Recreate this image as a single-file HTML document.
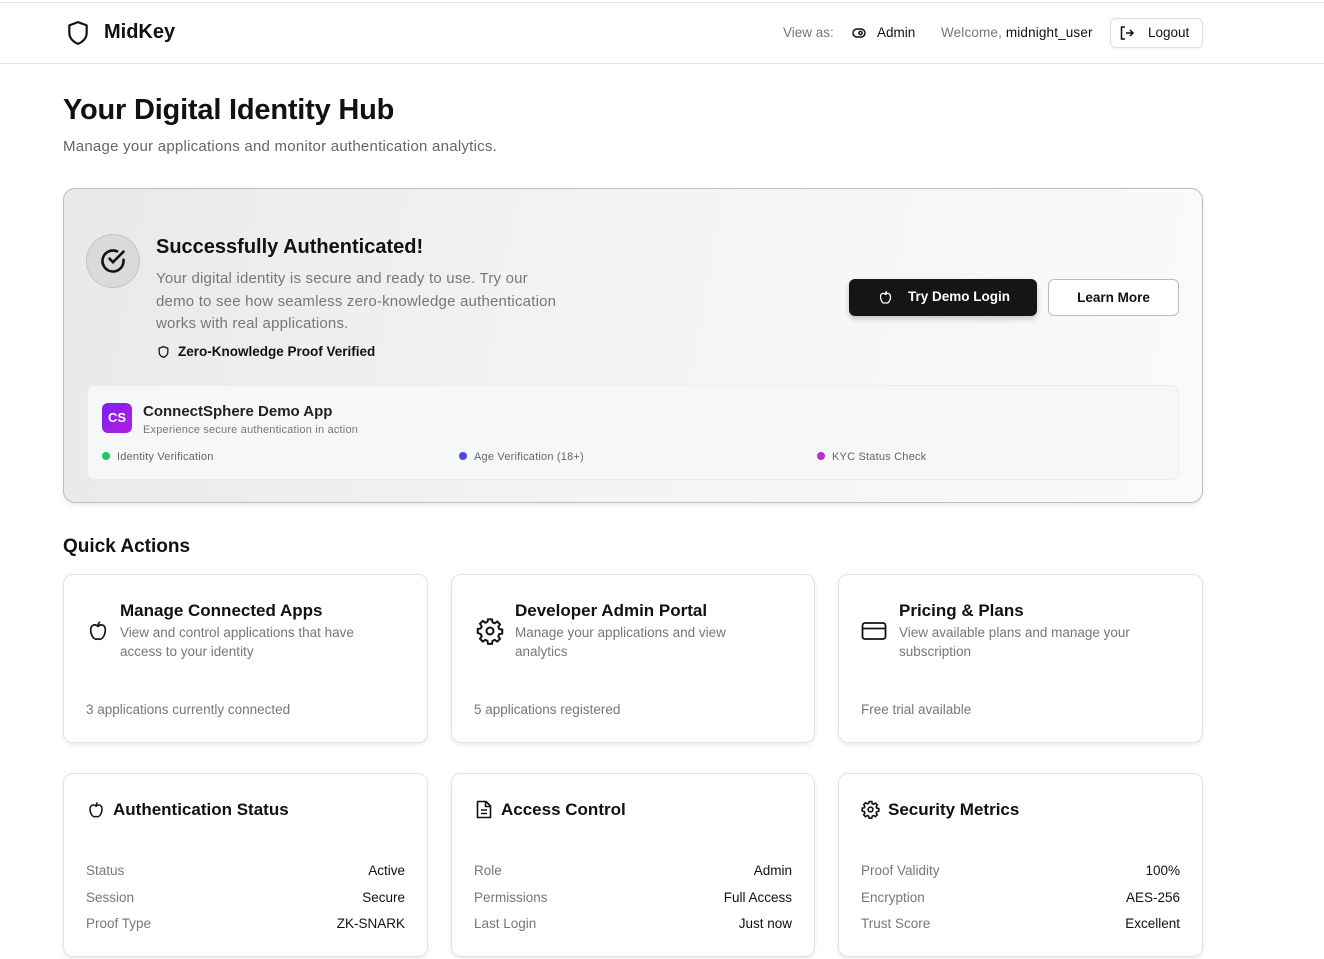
<!DOCTYPE html>
<html><head><meta charset="utf-8">
<style>
*{box-sizing:border-box;margin:0;padding:0}
body{width:1324px;height:959px;overflow:hidden;background:#fff;font-family:"Liberation Sans",sans-serif;color:#111;position:relative}
.a{position:absolute}
.hdr{position:absolute;left:0;top:2px;width:1324px;height:62px;border-top:1px solid #e3e3e3;border-bottom:1px solid #e6e6e6}
.card{position:absolute;border:1px solid #e2e2e2;border-radius:10px;box-shadow:0 2px 4px rgba(0,0,0,.08);background:#fff}
.t{font-size:17px;font-weight:bold;color:#111}
.d{font-size:13.5px;color:#777;line-height:19px}
.row{position:absolute;left:22px;right:22px;font-size:13.5px;display:flex;justify-content:space-between}
.row span:first-child{color:#777}
.row span:last-child{color:#111}
svg{display:block}
</style></head><body>
<div class="hdr"></div>
<svg class="a" style="left:65px;top:19px" width="26" height="28" viewBox="0 0 24 24" fill="none" stroke="#111" stroke-width="2" stroke-linejoin="round"><path d="M12 2 L20 5 V12 C20 17 16 20.5 12 22 C8 20.5 4 17 4 12 V5 Z"/></svg>
<div class="a" style="left:104px;top:21px;font-size:20px;font-weight:bold">MidKey</div>
<div class="a" style="left:783px;top:25px;font-size:13.5px;color:#777">View as:</div>
<svg class="a" style="left:852px;top:27px" width="14" height="12" viewBox="0 0 14 12" fill="none" stroke="#111" stroke-width="1.5"><rect x="1" y="2" width="12" height="8" rx="4"/><circle cx="8.5" cy="6" r="1.6"/></svg>
<div class="a" style="left:877px;top:25px;font-size:13.5px">Admin</div>
<div class="a" style="left:941px;top:25px;font-size:13.5px;color:#777;letter-spacing:.15px">Welcome, <span style="color:#111">midnight_user</span></div>
<div class="a" style="left:1110px;top:18px;width:93px;height:30px;border:1px solid #ddd;border-radius:6px;box-shadow:0 1px 2px rgba(0,0,0,.06)"></div>
<svg class="a" style="left:1120px;top:26px" width="15" height="14" viewBox="0 0 15 14" fill="none" stroke="#111" stroke-width="1.5"><path d="M5 1H1.5V13H5M6 7H13M10 4L13 7L10 10"/></svg>
<div class="a" style="left:1148px;top:25px;font-size:13.5px">Logout</div>

<div class="a" style="left:63px;top:94px;font-size:29px;font-weight:bold;letter-spacing:-.2px">Your Digital Identity Hub</div>
<div class="a" style="left:63px;top:138px;font-size:15px;color:#666;letter-spacing:.25px">Manage your applications and monitor authentication analytics.</div>

<div class="a" style="left:63px;top:188px;width:1140px;height:315px;border:1px solid #bdbdbd;border-radius:12px;background:linear-gradient(100deg,#e9e9e9 0%,#f4f4f4 50%,#fafafa 100%);box-shadow:0 2px 4px rgba(0,0,0,.08)"></div>
<div class="a" style="left:86px;top:234px;width:54px;height:54px;border-radius:50%;background:#dadada;border:1px solid #c4c4c4"></div>
<svg class="a" style="left:99px;top:247px" width="28" height="28" viewBox="0 0 24 24" fill="none" stroke="#111" stroke-width="2.2" stroke-linecap="round"><path d="M21 11V12A9 9 0 1 1 15.5 3.7"/><path d="M21 4L12 13L9 10"/></svg>
<div class="a" style="left:156px;top:236px;font-size:20px;font-weight:bold">Successfully Authenticated!</div>
<div class="a" style="left:156px;top:268px;white-space:nowrap;font-size:15px;line-height:22.5px;color:#777;letter-spacing:.2px">Your digital identity is secure and ready to use. Try our<br>demo to see how seamless zero-knowledge authentication<br>works with real applications.</div>
<svg class="a" style="left:157px;top:345px" width="13" height="14" viewBox="0 0 24 24" fill="none" stroke="#111" stroke-width="2.4" stroke-linejoin="round"><path d="M12 2 L20 5 V12 C20 17 16 20.5 12 22 C8 20.5 4 17 4 12 V5 Z"/></svg>
<div class="a" style="left:178px;top:344px;font-size:13.5px;font-weight:bold;color:#111">Zero-Knowledge Proof Verified</div>
<div class="a" style="left:849px;top:279px;width:188px;height:37px;background:#151515;border-radius:6px;box-shadow:0 3px 6px rgba(0,0,0,.2)"></div>
<svg class="a" style="left:878px;top:290px" width="15" height="15" viewBox="0 0 24 24" fill="none" stroke="#fff" stroke-width="2"><path d="M12 7C9 4 4 5 4 11C4 16 7 21 10 21C11 21 11.5 20.5 12 20.5C12.5 20.5 13 21 14 21C17 21 20 16 20 11C20 5 15 4 12 7ZM12 7C12 5 13 3 14 2"/></svg>
<div class="a" style="left:908px;top:289px;font-size:13.5px;font-weight:bold;color:#fff">Try Demo Login</div>
<div class="a" style="left:1048px;top:279px;width:131px;height:37px;border:1px solid #bbb;border-radius:6px;background:#fff;font-size:13.5px;font-weight:bold;text-align:center;line-height:35px">Learn More</div>

<div class="a" style="left:87px;top:385px;width:1092px;height:95px;border:1px solid #ececec;border-radius:8px;background:#f6f7f7"></div>
<div class="a" style="left:102px;top:403px;width:30px;height:30px;border-radius:6px;background:linear-gradient(135deg,#7b1ff2,#b21fe0);color:#fff;font-size:13px;font-weight:bold;text-align:center;line-height:30px">CS</div>
<div class="a" style="left:143px;top:403px;font-size:15px;font-weight:bold;color:#222">ConnectSphere Demo App</div>
<div class="a" style="left:143px;top:424px;font-size:11px;color:#777;letter-spacing:.2px">Experience secure authentication in action</div>
<div class="a" style="left:102px;top:452px;width:8px;height:8px;border-radius:50%;background:#22c55e"></div>
<div class="a" style="left:117px;top:451px;font-size:11px;color:#666;letter-spacing:.2px">Identity Verification</div>
<div class="a" style="left:459px;top:452px;width:8px;height:8px;border-radius:50%;background:#4f46e5"></div>
<div class="a" style="left:474px;top:451px;font-size:11px;color:#666;letter-spacing:.2px">Age Verification (18+)</div>
<div class="a" style="left:817px;top:452px;width:8px;height:8px;border-radius:50%;background:#c026d3"></div>
<div class="a" style="left:832px;top:451px;font-size:11px;color:#666;letter-spacing:.2px">KYC Status Check</div>

<div class="a" style="left:63px;top:536px;font-size:19px;font-weight:bold">Quick Actions</div>

<div class="card" style="left:63px;top:574px;width:365px;height:169px">
 <svg class="a" style="left:23px;top:45px" width="22" height="22" viewBox="0 0 24 24" fill="none" stroke="#111" stroke-width="1.8"><path d="M12 7C9 4 4 5 4 11C4 16 7 21 10 21C11 21 11.5 20.5 12 20.5C12.5 20.5 13 21 14 21C17 21 20 16 20 11C20 5 15 4 12 7ZM12 7C12 5 13 3 14 2"/></svg>
 <div class="a t" style="left:56px;top:26px">Manage Connected Apps</div>
 <div class="a d" style="left:56px;top:48px;width:270px">View and control applications that have access to your identity</div>
 <div class="a d" style="left:22px;top:125px">3 applications currently connected</div>
</div>
<div class="card" style="left:451px;top:574px;width:364px;height:169px">
 <svg class="a" style="left:24px;top:42px" width="28" height="28" viewBox="0 0 24 24" fill="none" stroke="#111" stroke-width="1.7"><path d="M10.3 2h3.4l.5 2.6 1.8.8 2.2-1.5 2.4 2.4-1.5 2.2.8 1.8 2.6.5v3.4l-2.6.5-.8 1.8 1.5 2.2-2.4 2.4-2.2-1.5-1.8.8-.5 2.6h-3.4l-.5-2.6-1.8-.8-2.2 1.5-2.4-2.4 1.5-2.2-.8-1.8L1.5 13.7v-3.4l2.6-.5.8-1.8-1.5-2.2 2.4-2.4 2.2 1.5 1.8-.8z"/><circle cx="12" cy="12" r="3"/></svg>
 <div class="a t" style="left:63px;top:26px">Developer Admin Portal</div>
 <div class="a d" style="left:63px;top:48px;width:260px">Manage your applications and view analytics</div>
 <div class="a d" style="left:22px;top:125px">5 applications registered</div>
</div>
<div class="card" style="left:838px;top:574px;width:365px;height:169px">
 <svg class="a" style="left:22px;top:46px" width="26" height="20" viewBox="0 0 26 20" fill="none" stroke="#111" stroke-width="1.8"><rect x="1.5" y="2" width="23" height="16" rx="2.5"/><path d="M1.5 7.5H24.5"/></svg>
 <div class="a t" style="left:60px;top:26px">Pricing &amp; Plans</div>
 <div class="a d" style="left:60px;top:48px;width:270px">View available plans and manage your subscription</div>
 <div class="a d" style="left:22px;top:125px">Free trial available</div>
</div>

<div class="card" style="left:63px;top:773px;width:365px;height:184px">
 <svg class="a" style="left:23px;top:27px" width="18" height="18" viewBox="0 0 24 24" fill="none" stroke="#111" stroke-width="2"><path d="M12 7C9 4 4 5 4 11C4 16 7 21 10 21C11 21 11.5 20.5 12 20.5C12.5 20.5 13 21 14 21C17 21 20 16 20 11C20 5 15 4 12 7ZM12 7C12 5 13 3 14 2"/></svg>
 <div class="a t" style="left:49px;top:26px">Authentication Status</div>
 <div class="row" style="top:89px"><span>Status</span><span>Active</span></div>
 <div class="row" style="top:116px"><span>Session</span><span>Secure</span></div>
 <div class="row" style="top:142px"><span>Proof Type</span><span>ZK-SNARK</span></div>
</div>
<div class="card" style="left:451px;top:773px;width:364px;height:184px">
 <svg class="a" style="left:24px;top:26px" width="16" height="19" viewBox="0 0 16 19" fill="none" stroke="#111" stroke-width="1.6" stroke-linejoin="round"><path d="M1.5 1.5H10L14.5 6V17.5H1.5Z"/><path d="M9.5 1.5V6.5H14.5M5 10H11M5 13.5H11"/></svg>
 <div class="a t" style="left:49px;top:26px">Access Control</div>
 <div class="row" style="top:89px"><span>Role</span><span>Admin</span></div>
 <div class="row" style="top:116px"><span>Permissions</span><span>Full Access</span></div>
 <div class="row" style="top:142px"><span>Last Login</span><span>Just now</span></div>
</div>
<div class="card" style="left:838px;top:773px;width:365px;height:184px">
 <svg class="a" style="left:22px;top:26px" width="19" height="19" viewBox="0 0 24 24" fill="none" stroke="#111" stroke-width="2"><path d="M10.3 2h3.4l.5 2.6 1.8.8 2.2-1.5 2.4 2.4-1.5 2.2.8 1.8 2.6.5v3.4l-2.6.5-.8 1.8 1.5 2.2-2.4 2.4-2.2-1.5-1.8.8-.5 2.6h-3.4l-.5-2.6-1.8-.8-2.2 1.5-2.4-2.4 1.5-2.2-.8-1.8L1.5 13.7v-3.4l2.6-.5.8-1.8-1.5-2.2 2.4-2.4 2.2 1.5 1.8-.8z"/><circle cx="12" cy="12" r="3"/></svg>
 <div class="a t" style="left:49px;top:26px">Security Metrics</div>
 <div class="row" style="top:89px"><span>Proof Validity</span><span>100%</span></div>
 <div class="row" style="top:116px"><span>Encryption</span><span>AES-256</span></div>
 <div class="row" style="top:142px"><span>Trust Score</span><span>Excellent</span></div>
</div>
</body></html>
